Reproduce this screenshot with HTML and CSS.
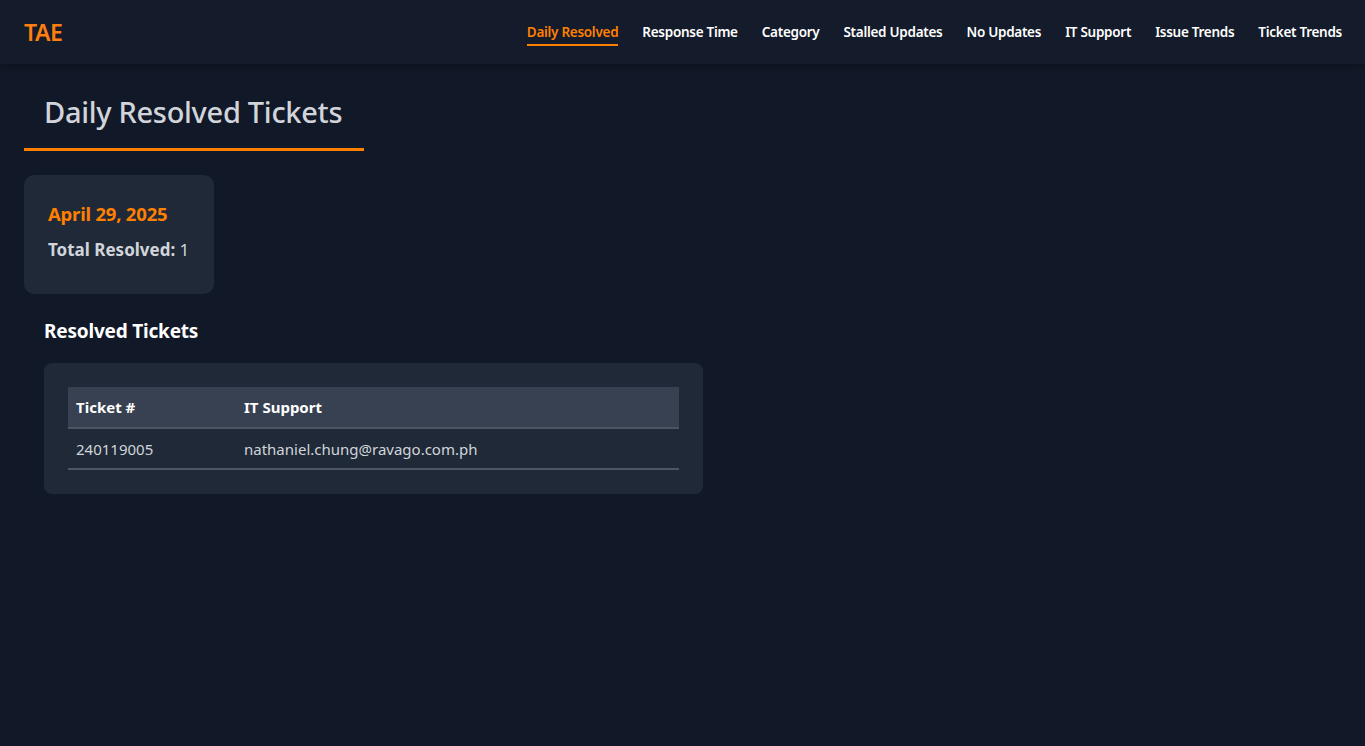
FILE: index.html
```html
<!DOCTYPE html>
<html lang="en">
<head>
<meta charset="utf-8">
<title>Daily Resolved Tickets</title>
<link rel="stylesheet" href="styles.css">
</head>
<body>
<header class="topbar">
  <div class="brand">TAE</div>
  <nav class="nav">
    <a class="nav-link active" href="#">Daily Resolved</a>
    <a class="nav-link" href="#">Response Time</a>
    <a class="nav-link" href="#">Category</a>
    <a class="nav-link" href="#">Stalled Updates</a>
    <a class="nav-link" href="#">No Updates</a>
    <a class="nav-link" href="#">IT Support</a>
    <a class="nav-link" href="#">Issue Trends</a>
    <a class="nav-link" href="#">Ticket Trends</a>
  </nav>
</header>
<main class="main">
  <h1 class="page-title">Daily Resolved Tickets</h1>
  <section class="summary-card">
    <div class="summary-date">April 29, 2025</div>
    <div class="summary-total"><strong>Total Resolved:</strong> 1</div>
  </section>
  <h2 class="section-title">Resolved Tickets</h2>
  <section class="table-card">
    <table class="tickets">
      <thead>
        <tr><th class="col-ticket">Ticket #</th><th>IT Support</th></tr>
      </thead>
      <tbody>
        <tr><td>240119005</td><td>nathaniel.chung@ravago.com.ph</td></tr>
      </tbody>
    </table>
  </section>
</main>
</body>
</html>
```
FILE: styles.css
```css
* { box-sizing: border-box; }
html, body { margin: 0; padding: 0; }
body {
  background: #111827;
  color: #e5e7eb;
  font-family: "Noto Sans", "Open Sans", sans-serif;
  min-height: 746px;
}
.topbar {
  height: 64px;
  background: #141b2a;
  display: flex;
  align-items: center;
  justify-content: space-between;
  padding: 0 23px 0 24px;
  box-shadow: 0 2px 6px rgba(0,0,0,0.25);
}
.brand {
  color: #ff7f0e;
  font-size: 23px;
  font-weight: 600;
  letter-spacing: -0.5px;
}
.nav { display: flex; gap: 24px; align-items: center; }
.nav-link {
  color: #ffffff;
  text-decoration: none;
  font-size: 13.5px;
  font-weight: 600;
  letter-spacing: -0.28px;
  padding: 3px 0 3px;
  border-bottom: 2px solid transparent;
  margin-top: 1px;
}
.nav-link.active { color: #ff8000; border-bottom-color: #ff8000; }
.main { padding: 24px; }
.page-title {
  display: inline-block;
  margin: 0;
  width: 340px;
  padding: 4px 0 17px 20px;
  font-size: 29px;
  font-weight: 500;
  color: #d1d5db;
  letter-spacing: -0.3px;
  border-bottom: 3px solid #ff8000;
}
.summary-card {
  margin-top: 24px;
  width: 190px;
  background: #1f2937;
  border-radius: 10px;
  padding: 26px 24px 33px;
}
.summary-date {
  color: #ff8000;
  font-size: 18.5px;
  font-weight: 700;
  letter-spacing: -0.2px;
}
.summary-total {
  margin-top: 12px;
  color: #d1d5db;
  font-size: 17px;
}
.summary-total strong { font-weight: 700; }
.section-title {
  margin: 24px 0 19px 20px;
  font-size: 19px;
  font-weight: 700;
  color: #ffffff;
  letter-spacing: -0.2px;
}
.table-card {
  margin-left: 20px;
  width: 659px;
  background: #1f2937;
  border-radius: 8px;
  padding: 24px;
}
.tickets {
  width: 100%;
  border-collapse: collapse;
  font-size: 15px;
}
.tickets th {
  background: #374151;
  color: #ffffff;
  text-align: left;
  font-weight: 700;
  height: 41px;
  padding: 0 8px;
  border-bottom: 2px solid #4b5563;
}
.tickets th.col-ticket { width: 168px; }
.tickets td {
  color: #d1d5db;
  height: 41px;
  padding: 0 8px;
  border-bottom: 2px solid #4b5563;
}
```
